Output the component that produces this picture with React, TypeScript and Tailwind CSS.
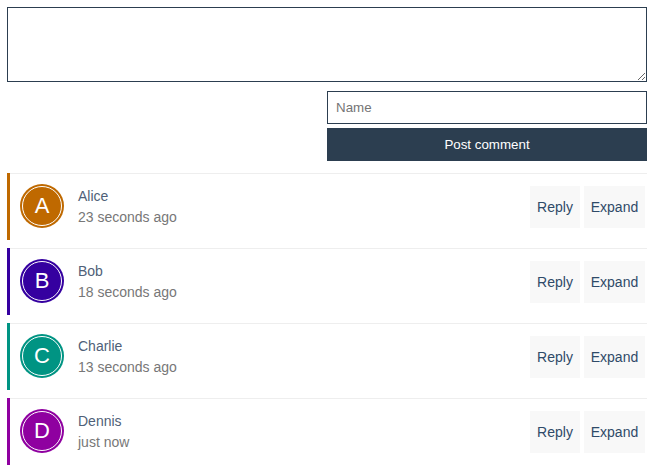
const comments = [
  { name: "Alice", time: "23 seconds ago", stripe: "bg-[#bf6900]", avatar: "bg-[#bf6900]" },
  { name: "Bob", time: "18 seconds ago", stripe: "bg-[#3500a0]", avatar: "bg-[#3500a0]" },
  { name: "Charlie", time: "13 seconds ago", stripe: "bg-[#009483]", avatar: "bg-[#009483]" },
  { name: "Dennis", time: "just now", stripe: "bg-[#8f00a0]", avatar: "bg-[#8f00a0]" },
];

type CommentRowProps = {
  name: string;
  time: string;
  stripe: string;
  avatar: string;
};

function CommentRow({ name, time, stripe, avatar }: CommentRowProps) {
  return (
    <div className="flex h-[75px] border-t border-t-[#eeeeee]">
      {/* Coloured stripe, sits over the row's top border */}
      <div className={`-mt-[1px] w-[3px] h-[67px] ${stripe}`} />

      {/* Avatar */}
      <div className={`ml-[10px] mt-[10px] flex h-[44px] w-[44px] items-center justify-center rounded-full ${avatar}`}>
        <div className="flex h-[40px] w-[40px] items-center justify-center rounded-full border border-white pb-[2px] text-[22px] text-white">
          {name[0]}
        </div>
      </div>

      {/* Name and time */}
      <div className="ml-[14px] flex-1 pt-[12px] text-[14px] leading-[21px]">
        <div className="text-[#4f5f78]">{name}</div>
        <div className="text-[#777777]">{time}</div>
      </div>

      {/* Actions */}
      <div className="mr-[2px] mt-[12px] flex h-[42px] gap-[4px] text-[14px] text-[#2f4a68]">
        <button className="w-[50px] bg-[#f8f8f8]">Reply</button>
        <button className="w-[61px] bg-[#f8f8f8]">Expand</button>
      </div>
    </div>
  );
}

export default function App() {
  return (
    <div className="h-[471px] w-[655px] bg-white pl-[7px] pt-[7px] font-['Liberation_Sans',sans-serif]">
      <div className="w-[640px]">
        <textarea className="block h-[75px] w-full border border-[#2c3e50] outline-none" />

        {/* Name and submit */}
        <div className="ml-auto mt-[9px] w-[320px]">
          <input
            placeholder="Name"
            className="block h-[33px] w-full border border-[#2c3e50] px-[8px] text-[13.33px] outline-none placeholder:text-[#757575]"
          />
          <button className="mt-[4px] block h-[33px] w-full bg-[#2c3e50] text-[13.33px] text-white">
            Post comment
          </button>
        </div>

        <div className="mt-[12px]">
          {comments.map((comment) => (
            <CommentRow key={comment.name} {...comment} />
          ))}
        </div>
      </div>
    </div>
  );
}
